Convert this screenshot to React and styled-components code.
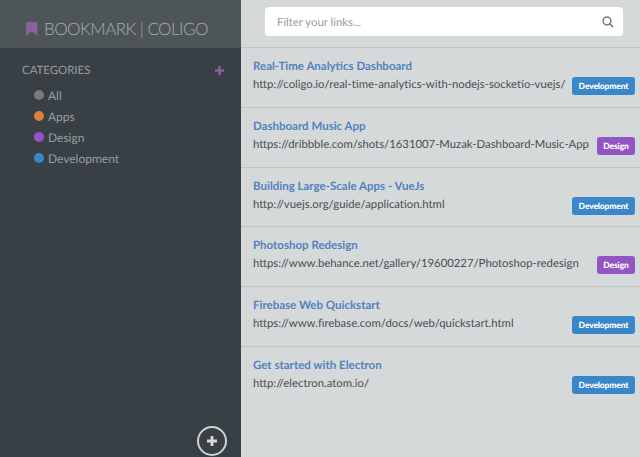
import React from 'react';
import styled, { createGlobalStyle } from 'styled-components';

const GlobalStyle = createGlobalStyle`
  * { box-sizing: border-box; }
  body { margin: 0; overflow: hidden; }
`;

const Page = styled.div`
  display: flex;
  width: 640px;
  height: 457px;
  overflow: hidden;
  background: #d5d9da;
  font-family: Lato, sans-serif;
  text-rendering: geometricPrecision;
`;

const Sidebar = styled.aside`
  display: flex;
  flex-direction: column;
  flex: 0 0 241px;
  background: #383f45;
  color: #9a9ea1;
`;

const Brand = styled.header`
  display: flex;
  align-items: center;
  height: 48px;
  padding: 10px 0 0 26px;
  gap: 6px;
  background: #4e5557;
  svg { width: 12px; height: 14px; fill: #88629a; }
`;

const BrandName = styled.h1`
  margin: 0;
  font-size: 17px;
  line-height: 20px;
  font-weight: 300;
  letter-spacing: -0.55px;
  white-space: nowrap;
  color: #a8adaf;
`;

const SectionHead = styled.div`
  display: flex;
  align-items: center;
  justify-content: space-between;
  height: 16px;
  margin: 15px 17px 0 22px;
`;

const SectionTitle = styled.h2`
  margin: 0;
  font-size: 11.5px;
  font-weight: 400;
  line-height: 16px;
  letter-spacing: -0.05px;
`;

const AddCategory = styled.button`
  display: flex;
  margin-bottom: 1px;
  padding: 0;
  border: 0;
  background: none;
  color: #88629a;
  svg { width: 9px; height: 9px; }
`;

const CategoryList = styled.ul`
  margin: 6px 0 0 34px;
  padding: 0;
  list-style: none;
`;

const Category = styled.li`
  display: flex;
  align-items: center;
  height: 21.1px;
  gap: 4px;
  font-size: 12px;
  line-height: 16px;
`;

const Dot = styled.span`
  width: 10px;
  height: 10px;
  margin-bottom: 2px;
  border-radius: 50%;
  background: ${({ $color }) => $color};
`;

const AddLink = styled.button`
  display: flex;
  align-items: center;
  justify-content: center;
  align-self: flex-end;
  width: 30px;
  height: 30px;
  margin: auto 14px 1px 0;
  padding: 0;
  border: 2px solid #cfd3d5;
  border-radius: 50%;
  background: none;
  color: #d5d9da;
  svg { width: 10px; height: 10px; }
`;

const Main = styled.main`
  flex: 1;
  min-width: 0;
`;

const FilterBar = styled.div`
  height: 47px;
  padding: 7px 17px 0 24px;
`;

const Search = styled.label`
  display: flex;
  align-items: center;
  height: 29px;
  padding: 0 9px 0 12px;
  border-radius: 4px;
  background: #fff;
  svg { width: 12px; height: 12px; flex: none; }
`;

const SearchInput = styled.input`
  flex: 1;
  min-width: 0;
  height: 18px;
  padding: 1px 0 0;
  border: 0;
  outline: 0;
  background: none;
  font: 400 11.35px/16px Lato, sans-serif;
  text-rendering: geometricPrecision;
  &::placeholder { color: #9b9b9b; opacity: 1; }
`;

const Bookmark = styled.article`
  display: flex;
  justify-content: space-between;
  height: 59.8px;
  padding: 11px 5px 0 12px;
  border-top: 1px solid #bfc4c6;
`;

const LinkText = styled.div`
  white-space: nowrap;
`;

const Title = styled.h3`
  margin: 0;
  font-size: 11.5px;
  line-height: 16px;
  font-weight: 700;
  color: #5282bd;
`;

const Url = styled.p`
  margin: 2px 0 0;
  font-size: 11.34px;
  line-height: 16px;
  color: #4b4e51;
`;

const Tag = styled.span`
  display: flex;
  align-items: center;
  justify-content: center;
  flex: none;
  width: ${({ $width }) => $width}px;
  height: 18px;
  margin-top: 18px;
  border-radius: 3px;
  background: ${({ $color }) => $color};
  color: #fff;
  font-size: 8.5px;
  font-weight: 900;
  letter-spacing: -0.15px;
`;

const categories = [
  { name: 'All', color: '#7b7b7b' },
  { name: 'Apps', color: '#e07f3c' },
  { name: 'Design', color: '#9355c4' },
  { name: 'Development', color: '#3986c9' },
];

const tags = {
  Development: { color: '#3986c9', width: 63 },
  Design: { color: '#9355c4', width: 38 },
};

const bookmarks = [
  { title: 'Real-Time Analytics Dashboard', url: 'http://coligo.io/real-time-analytics-with-nodejs-socketio-vuejs/', tag: 'Development' },
  { title: 'Dashboard Music App', url: 'https://dribbble.com/shots/1631007-Muzak-Dashboard-Music-App', tag: 'Design' },
  { title: 'Building Large-Scale Apps - VueJs', url: 'http://vuejs.org/guide/application.html', tag: 'Development' },
  { title: 'Photoshop Redesign', url: 'https://www.behance.net/gallery/19600227/Photoshop-redesign', tag: 'Design' },
  { title: 'Firebase Web Quickstart', url: 'https://www.firebase.com/docs/web/quickstart.html', tag: 'Development' },
  { title: 'Get started with Electron', url: 'http://electron.atom.io/', tag: 'Development' },
];

function PlusIcon() {
  return (
    <svg viewBox="0 0 9 9" fill="currentColor">
      <path d="M3.2 0h2.6v3.2H9v2.6H5.8V9H3.2V5.8H0V3.2h3.2z" />
    </svg>
  );
}

export default function App() {
  return (
    <>
      <GlobalStyle />
      <Page>
        <Sidebar>
          <Brand>
            <svg viewBox="0 0 12 14">
              <path d="M1 0h9.6q.9 0 .9.9V14L5.8 9.6 0 14V.9Q0 0 1 0z" />
            </svg>
            <BrandName>BOOKMARK | COLIGO</BrandName>
          </Brand>
          <SectionHead>
            <SectionTitle>CATEGORIES</SectionTitle>
            <AddCategory aria-label="Add category"><PlusIcon /></AddCategory>
          </SectionHead>
          <CategoryList>
            {categories.map((c) => (
              <Category key={c.name}><Dot $color={c.color} />{c.name}</Category>
            ))}
          </CategoryList>
          <AddLink aria-label="Add bookmark"><PlusIcon /></AddLink>
        </Sidebar>
        <Main>
          <FilterBar>
            <Search>
              <SearchInput placeholder="Filter your links..." />
              <svg viewBox="0 0 12 12" fill="none" stroke="#777" strokeWidth="1.5">
                <circle cx="5" cy="5" r="3.9" />
                <path d="M7.8 7.8 10.6 10.6" strokeLinecap="round" />
              </svg>
            </Search>
          </FilterBar>
          {bookmarks.map((b) => (
            <Bookmark key={b.title}>
              <LinkText>
                <Title>{b.title}</Title>
                <Url>{b.url}</Url>
              </LinkText>
              <Tag $color={tags[b.tag].color} $width={tags[b.tag].width}>{b.tag}</Tag>
            </Bookmark>
          ))}
        </Main>
      </Page>
    </>
  );
}
